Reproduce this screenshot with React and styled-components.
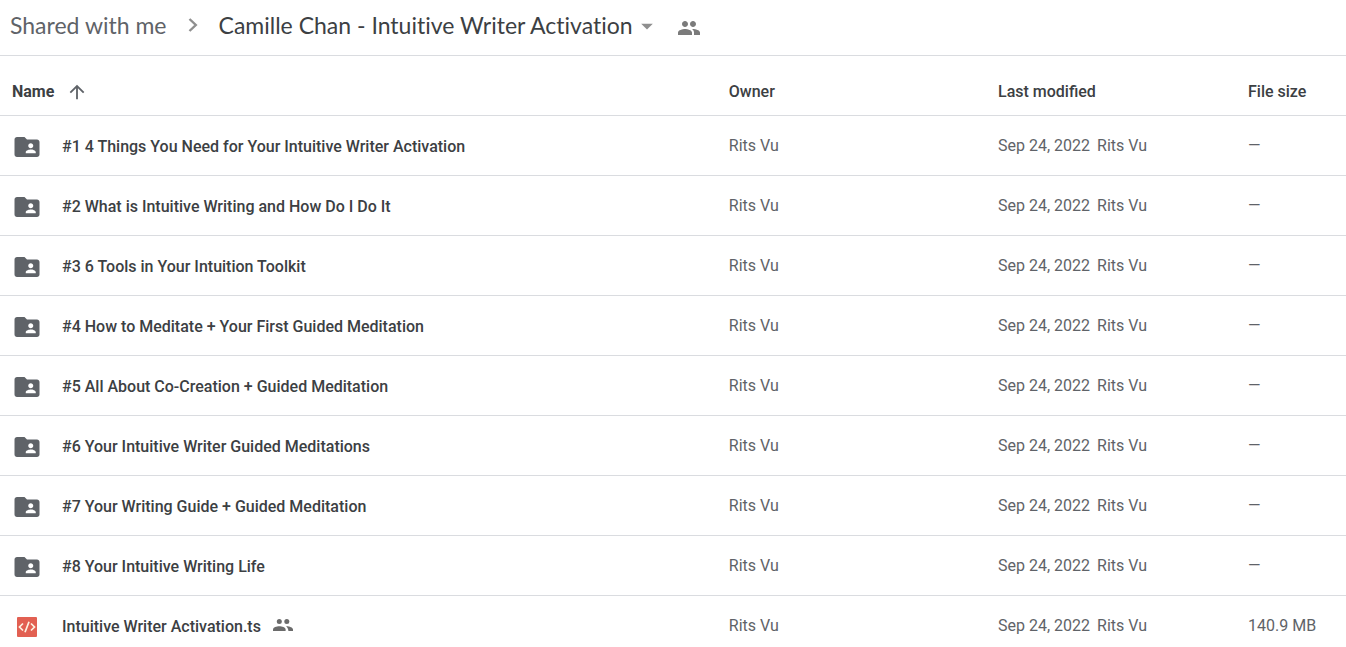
import React from 'react';
import styled, { createGlobalStyle } from 'styled-components';
import { MdFolderShared, MdPeople, MdArrowDropDown, MdArrowUpward } from 'react-icons/md';

const GlobalStyle = createGlobalStyle`
* {
  box-sizing: border-box;
}
body {
  margin: 0;
  background-color: #fff;
  color: #3c4043;
  font-family: Roboto, "Liberation Sans", sans-serif;
  font-size: 16px;
  line-height: 20px;
}`;

const Header = styled.header`
display: flex;
align-items: center;
height: 56px;
padding: 0 10px 4px;
border-bottom: 1px solid #dadce0;`;

const Crumbs = styled.nav`
display: flex;
align-items: center;
gap: 21px;
padding-bottom: 2px;
font: 400 23px/28px Lato, sans-serif;
font-variant-ligatures: none;
white-space: nowrap;`;

const Crumb = styled.a`
color: #5f6368;
text-decoration: none;`;

const Title = styled.h1`
margin: 0;
font: inherit;
font-variant-ligatures: none;`;

const IconButton = styled.button`
display: flex;
align-items: center;
justify-content: center;
padding: 0;
border: none;
background: none;
color: ${(props) => props.$color || '#5f6368'};
font-size: ${(props) => props.$size || 24}px;
cursor: pointer;`;

const Tools = styled.div`
display: flex;
align-items: flex-end;
gap: 16px;`;

const Files = styled.table`
width: 100%;
table-layout: fixed;
border-collapse: separate;
border-spacing: 0;`;

const Row = styled.tr`
height: 60px;`;

const Heading = styled.th`
width: ${(props) => props.$width || 'auto'};
padding: 12px 0 0;
border-bottom: 1px solid #dadce0;
font-weight: ${(props) => (props.$sorted ? 700 : 500)};
text-align: left;`;

const Cell = styled.td`
padding: 0;
border-bottom: 1px solid #dadce0;
color: #5f6368;
white-space: nowrap;`;

const Sort = styled.div`
display: flex;
align-items: center;
gap: 12px;
padding-left: 12px;`;

const Name = styled.div`
display: flex;
align-items: center;
padding: 2px 0 0 12px;
color: #3c4043;
font-weight: 500;`;

const FileIcon = styled.span`
display: flex;
justify-content: center;
width: 30px;
margin-right: 20px;
color: #5f6368;
font-size: 30px;`;

const Shared = styled.span`
display: flex;
margin-left: 12px;
padding-bottom: 4px;
color: #6b6b6b;`;

const Modified = styled.div`
display: flex;
gap: 7px;`;

const folders = [
  '#1 4 Things You Need for Your Intuitive Writer Activation',
  '#2 What is Intuitive Writing and How Do I Do It',
  '#3 6 Tools in Your Intuition Toolkit',
  '#4 How to Meditate + Your First Guided Meditation',
  '#5 All About Co-Creation + Guided Meditation',
  '#6 Your Intuitive Writer Guided Meditations',
  '#7 Your Writing Guide + Guided Meditation',
  '#8 Your Intuitive Writing Life',
];

const files = [
  ...folders.map((name) => ({ name, size: '—' })),
  { name: 'Intuitive Writer Activation.ts', size: '140.9 MB', code: true },
];

function Chevron() {
  return (
    <svg width="10" height="14" viewBox="0 0 10 14" fill="none" stroke="#8f8f8f" strokeWidth="2.4">
      <path d="M1.5 1L7.8 7L1.5 13" />
    </svg>
  );
}

function CodeIcon() {
  return (
    <svg width="20" height="20" viewBox="0 0 20 20" fill="none" stroke="#fdf3e3" strokeWidth="1.7">
      <rect width="20" height="20" rx="1" fill="#e26052" stroke="none" />
      <path d="M6 6.5L2.5 10L6 13.5M14 6.5L17.5 10L14 13.5M12 4.8L8 15.2" />
    </svg>
  );
}

function GroupIcon() {
  return (
    <svg width="20" height="12" viewBox="0 0 20 12" fill="currentColor">
      <circle cx="6.3" cy="2.6" r="2.5" />
      <circle cx="13.8" cy="2.6" r="2.5" />
      <path d="M0 12V10.4C0 8.3 3.6 7.2 6.3 7.2S12.6 8.3 12.6 10.4V12Z" />
      <path d="M13 7.2C16 7 20 8.3 20 10.4V12H15.4C15.4 10 14.6 8.5 13 7.2Z" />
    </svg>
  );
}

export default function App() {
  return (
    <>
      <GlobalStyle />
      <Header>
        <Crumbs>
          <Crumb href="#shared">Shared with me</Crumb>
          <Chevron />
          <Title>Camille Chan - Intuitive Writer Activation</Title>
        </Crumbs>
        <Tools>
          <IconButton aria-label="Folder menu" $color="#8f8f8f" $size={28}><MdArrowDropDown /></IconButton>
          <IconButton aria-label="Manage people" $color="#7b7b7b"><MdPeople /></IconButton>
        </Tools>
      </Header>
      <Files>
        <thead>
          <Row>
            <Heading $sorted>
              <Sort>
                Name
                <IconButton aria-label="Reverse sort direction" $size={22}><MdArrowUpward /></IconButton>
              </Sort>
            </Heading>
            <Heading $width="20%">Owner</Heading>
            <Heading $width="250px">Last modified</Heading>
            <Heading $width="98px">File size</Heading>
          </Row>
        </thead>
        <tbody>
          {files.map((file) => (
            <Row key={file.name}>
              <Cell>
                <Name>
                  <FileIcon>{file.code ? <CodeIcon /> : <MdFolderShared />}</FileIcon>
                  {file.name}
                  {file.code && <Shared><GroupIcon /></Shared>}
                </Name>
              </Cell>
              <Cell>Rits Vu</Cell>
              <Cell>
                <Modified>
                  <span>Sep 24, 2022</span>
                  <span>Rits Vu</span>
                </Modified>
              </Cell>
              <Cell>{file.size}</Cell>
            </Row>
          ))}
        </tbody>
      </Files>
    </>
  );
}
